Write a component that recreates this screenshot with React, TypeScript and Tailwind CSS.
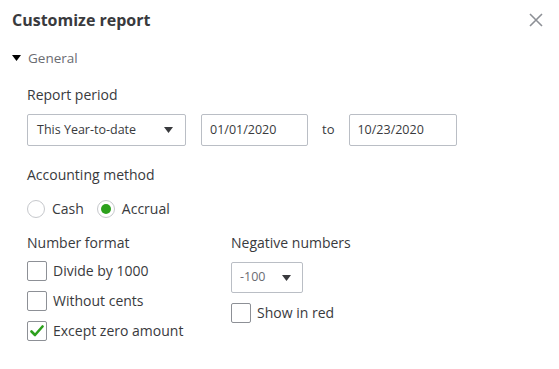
import React from "react";

const font = { fontFamily: '"Open Sans", "Liberation Sans", sans-serif' };

function Caret() {
    return (
        <svg width="9" height="6" viewBox="0 0 9 6" className="shrink-0">
            <path d="M0 0 L9 0 L4.5 6 Z" fill="#393a3d" />
        </svg>
    );
}

function Checkbox({ checked, label }: { checked?: boolean; label: string }) {
    return (
        <div className="flex items-center h-[20px]">
            <span className="w-[20px] h-[20px] rounded-[2px] border border-[#8d9096] bg-white flex items-center justify-center shrink-0">
                {checked && (
                    <svg width="14" height="12" viewBox="0 0 14 12">
                        <path d="M1.5 6.5 L5 10 L12.5 1.5" fill="none" stroke="#2ca01c" strokeWidth="2.6" strokeLinecap="round" strokeLinejoin="round" />
                    </svg>
                )}
            </span>
            <span className="ml-[6px] text-[14px] text-[#393a3d] leading-[20px]">{label}</span>
        </div>
    );
}

function Radio({ checked, label }: { checked?: boolean; label: string }) {
    return (
        <div className="flex items-center h-[18px]">
            <span className="w-[18px] h-[18px] rounded-full border border-[#c6c8cc] bg-white flex items-center justify-center shrink-0">
                {checked && <span className="w-[10px] h-[10px] rounded-full bg-[#2ca01c]" />}
            </span>
            <span className="ml-[7px] text-[14px] text-[#393a3d] leading-[18px]">{label}</span>
        </div>
    );
}

export default function App() {
    return (
        <div className="w-[559px] h-[369px] bg-white overflow-hidden text-[#393a3d]" style={font}>
            {/* HEADER */}
            <div className="flex items-center justify-between pl-[12px] pr-[16px] pt-[10px] h-[30px]">
                <h1 className="text-[16px] font-bold leading-[20px] text-[#393a3d]">Customize report</h1>
                <svg width="14" height="14" viewBox="0 0 14 14" className="mt-[-1px]">
                    <path d="M1 1 L13 13 M13 1 L1 13" stroke="#8d9096" strokeWidth="1.6" />
                </svg>
            </div>

            {/* GENERAL */}
            <div className="flex items-center pl-[12px] mt-[18px] h-[20px]">
                <svg width="9" height="6" viewBox="0 0 9 6" className="shrink-0">
                    <path d="M0 0 L9 0 L4.5 6 Z" fill="#000" />
                </svg>
                <span className="ml-[7px] text-[13.5px] text-[#6b6c72] leading-[20px]">General</span>
            </div>

            <div className="pl-[27px]">
                <div className="mt-[17px] text-[14px] leading-[20px]">Report period</div>

                <div className="mt-[9px] flex items-center h-[32px]">
                    <div className="w-[159px] h-[32px] border border-[#babec5] rounded-[2px] flex items-center justify-between pl-[9px] pr-[12px]">
                        <span className="text-[12.5px] text-[#393a3d]">This Year-to-date</span>
                        <Caret />
                    </div>
                    <div className="ml-[15px] w-[107px] h-[32px] border border-[#babec5] rounded-[2px] flex items-center pl-[8px]">
                        <span className="text-[12.5px] text-[#393a3d]">01/01/2020</span>
                    </div>
                    <span className="ml-[14px] text-[13px] text-[#393a3d]">to</span>
                    <div className="ml-[15px] w-[108px] h-[32px] border border-[#babec5] rounded-[2px] flex items-center pl-[7px]">
                        <span className="text-[12.5px] text-[#393a3d]">10/23/2020</span>
                    </div>
                </div>

                <div className="mt-[19px] text-[14px] leading-[20px]">Accounting method</div>

                <div className="mt-[15px] flex items-center gap-[13px]">
                    <Radio label="Cash" />
                    <Radio checked label="Accrual" />
                </div>

                <div className="mt-[15px] flex">
                    {/* NUMBER FORMAT */}
                    <div className="w-[204px]">
                        <div className="text-[14px] leading-[20px]">Number format</div>
                        <div className="mt-[8px] flex flex-col gap-[10px]">
                            <Checkbox label="Divide by 1000" />
                            <Checkbox label="Without cents" />
                            <Checkbox checked label="Except zero amount" />
                        </div>
                    </div>

                    {/* NEGATIVE NUMBERS */}
                    <div>
                        <div className="text-[14px] leading-[20px]">Negative numbers</div>
                        <div className="mt-[9px] w-[72px] h-[31px] border border-[#babec5] rounded-[2px] flex items-center justify-between pl-[8px] pr-[11px]">
                            <span className="text-[12.5px] text-[#6b6c72]">-100</span>
                            <Caret />
                        </div>
                        <div className="mt-[10px]">
                            <Checkbox label="Show in red" />
                        </div>
                    </div>
                </div>
            </div>
        </div>
    );
}
